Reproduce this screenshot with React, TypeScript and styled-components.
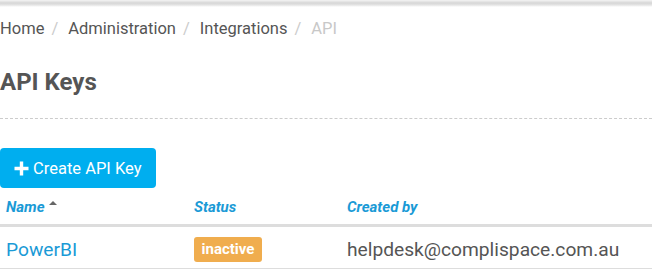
import React from 'react';
import styled, { createGlobalStyle } from 'styled-components';

const GlobalStyle = createGlobalStyle`
  html, body { margin: 0; padding: 0; background: #fff; }
  body { font-family: Roboto, "Liberation Sans", Arial, sans-serif; color: #555; }
`;

const TopShadow = styled.div`
  height: 7px;
  background: linear-gradient(to bottom, #f4f4f4 0px, #d6d6d6 3px, #e4e4e4 5px, #fff 7px);
`;

const Breadcrumb = styled.ol`
  display: flex;
  list-style: none;
  margin: 0;
  padding: 12px 0 0;
  font-size: 16.5px;
  line-height: 20px;
  height: 29px;

  li + li::before {
    content: '/';
    color: #ccc;
    padding: 0 10px 0 7px;
  }
`;

const Crumb = styled.li<{ $active?: boolean }>`
  color: ${(p) => (p.$active ? '#c8c8c8' : '#555')};
`;

const Title = styled.h1`
  margin: 0;
  padding: 22px 0 0;
  font-size: 24px;
  line-height: 24px;
  font-weight: 700;
  color: #555;
`;

const Divider = styled.hr`
  margin: 24px 0 0;
  border: 0;
  border-top: 1px dashed #ccc;
`;

const Button = styled.button`
  display: flex;
  align-items: center;
  gap: 4px;
  margin: 29px 0 0;
  height: 40px;
  width: 156px;
  padding: 0 0 0 14px;
  border: 0;
  border-radius: 4px;
  background: #00aeef;
  color: #fff;
  font-family: inherit;
  font-size: 16.5px;
`;

const Table = styled.table`
  width: 100%;
  border-collapse: collapse;
`;

const HeadCell = styled.th<{ $w?: number }>`
  width: ${(p) => (p.$w ? `${p.$w}px` : 'auto')};
  text-align: left;
  padding: 10px 6px 8px;
  font-size: 15px;
  line-height: 18px;
  font-style: italic;
  font-weight: 700;
  color: #1a9ad6;
  border-bottom: 3px solid #ddd;
`;

const Caret = styled.span`
  display: inline-block;
  width: 0;
  height: 0;
  margin-left: 4px;
  vertical-align: 7px;
  border-left: 4px solid transparent;
  border-right: 4px solid transparent;
  border-bottom: 4px solid #666;
`;

const Cell = styled.td`
  padding: 10px 6px 6px;
  font-size: 19.2px;
  line-height: 25px;
  border-bottom: 1px solid #ddd;
  vertical-align: middle;
`;

const Link = styled.a`
  color: #1a9ad6;
  text-decoration: none;
`;

const Badge = styled.span`
  display: block;
  width: 68px;
  box-sizing: border-box;
  text-align: center;
  height: 25px;
  line-height: 25px;
  border-radius: 3px;
  background: #f0ad4e;
  color: #fff;
  font-size: 15px;
  font-weight: 700;
`;

const PlusIcon = () => (
  <svg width="15" height="15" viewBox="0 0 15 15">
    <path d="M7.5 0.5v14M0.5 7.5h14" stroke="#fff" strokeWidth="3.4" />
  </svg>
);

export default function App() {
  return (
    <>
      <GlobalStyle />
      <TopShadow />
      <Breadcrumb>
        <Crumb>Home</Crumb>
        <Crumb>Administration</Crumb>
        <Crumb>Integrations</Crumb>
        <Crumb $active>API</Crumb>
      </Breadcrumb>
      <Title>API Keys</Title>
      <Divider />
      <Button>
        <PlusIcon />
        Create API Key
      </Button>
      <Table>
        <thead>
          <tr>
            <HeadCell $w={176}>
              Name<Caret />
            </HeadCell>
            <HeadCell $w={141}>Status</HeadCell>
            <HeadCell>Created by</HeadCell>
          </tr>
        </thead>
        <tbody>
          <tr>
            <Cell>
              <Link href="#">PowerBI</Link>
            </Cell>
            <Cell>
              <Badge>inactive</Badge>
            </Cell>
            <Cell>helpdesk@complispace.com.au</Cell>
          </tr>
        </tbody>
      </Table>
    </>
  );
}
